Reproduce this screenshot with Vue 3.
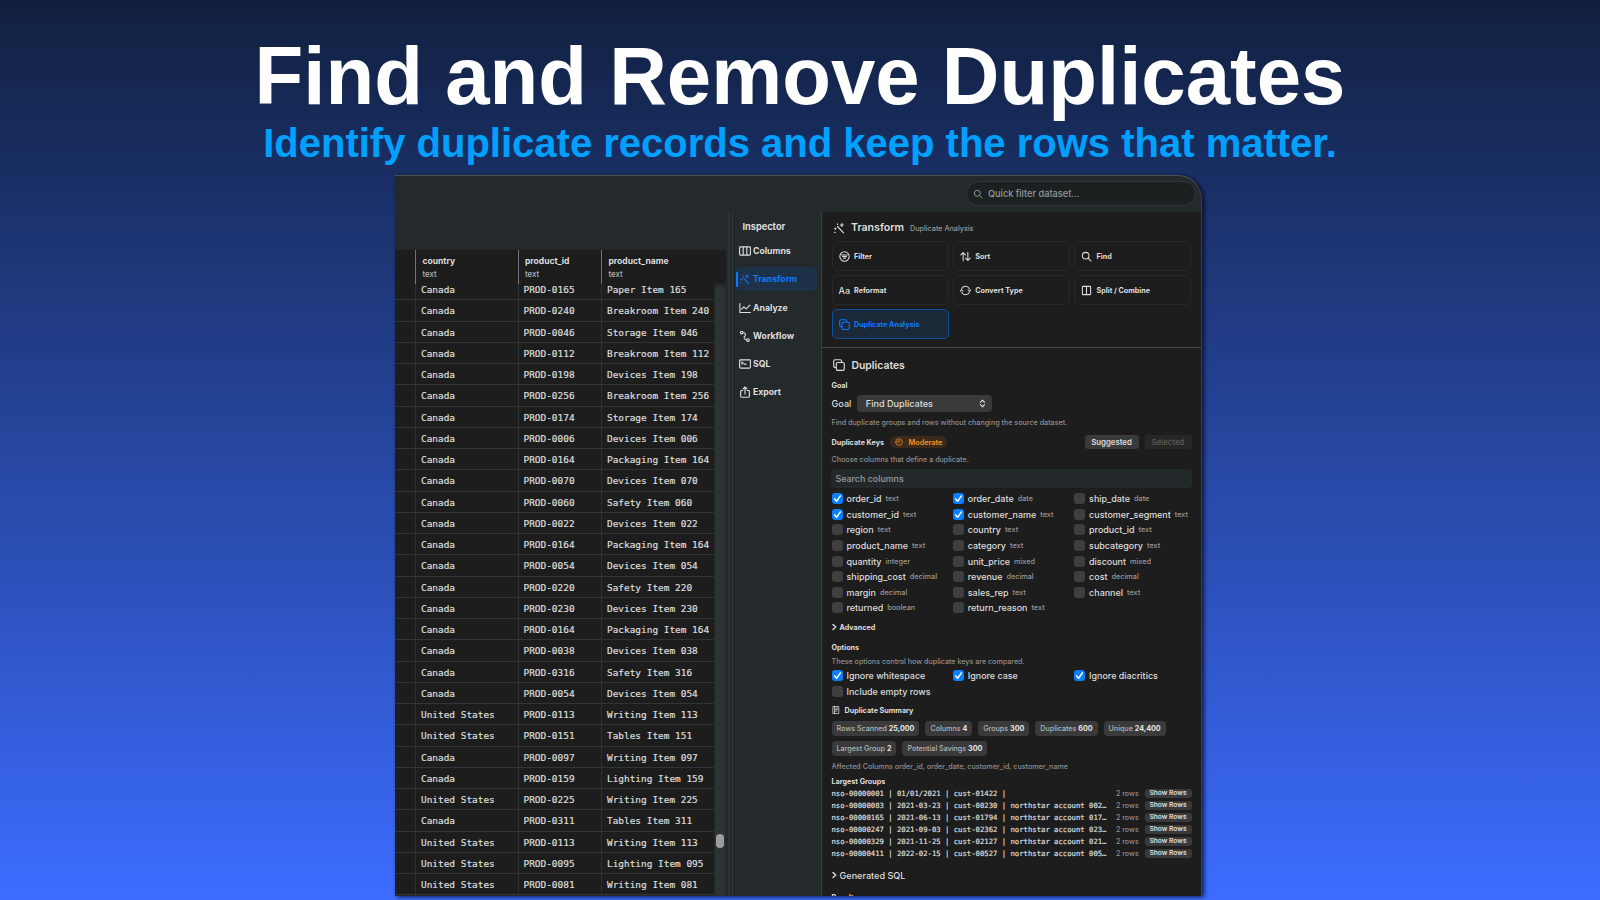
<template>
  <div class="page">
    <h1 class="title">Find and Remove Duplicates</h1>
    <p class="subtitle">Identify duplicate records and keep the rows that matter.</p>

    <div class="window">
      <div class="topbar">
        <div class="quick-filter">
          <svg class="icon" viewBox="0 0 16 16"><path :d="icons.search" /></svg>
          <span>Quick filter dataset...</span>
        </div>
      </div>

      <div class="main">
        <div class="table-pane">
          <div class="table-head">
            <div class="cell"></div>
            <div v-for="col in tableColumns" :key="col" class="cell">
              <b>{{ col }}</b>
              <small>text</small>
            </div>
          </div>
          <div class="table-body">
            <div class="rows">
              <div v-for="(row, i) in tableRows" :key="i" class="row">
                <div class="cell"></div>
                <div class="cell">{{ row[0] }}</div>
                <div class="cell">PROD-{{ row[1] }}</div>
                <div class="cell">{{ row[2] }} Item {{ row[1].slice(1) }}</div>
              </div>
            </div>
            <div class="scrollbar"><div class="thumb"></div></div>
          </div>
        </div>

        <div class="splitter"></div>

        <div class="inspector">
          <div class="inspector-title">Inspector</div>
          <div v-for="item in navItems" :key="item.label" class="nav-item" :class="{ active: item.active }">
            <svg class="icon" viewBox="0 0 16 16"><path :d="icons[item.icon]" /></svg>
            <span>{{ item.label }}</span>
          </div>
        </div>

        <div class="detail">
          <div class="detail-head">
            <svg class="icon" viewBox="0 0 16 16"><path :d="icons.wand" /></svg>
            <b>Transform</b>
            <span>Duplicate Analysis</span>
          </div>

          <div class="tools">
            <div v-for="tool in tools" :key="tool.label" class="tool" :class="{ active: tool.active }">
              <span v-if="tool.icon === 'aa'" class="aa">Aa</span>
              <svg v-else class="icon" viewBox="0 0 16 16"><path :d="icons[tool.icon]" /></svg>
              <span>{{ tool.label }}</span>
            </div>
          </div>

          <div class="panel">
            <div class="panel-title">
              <svg class="icon" viewBox="0 0 16 16"><path :d="icons.copy" /></svg>
              <span>Duplicates</span>
            </div>

            <div class="label goal-label">Goal</div>
            <div class="goal-row">
              <span>Goal</span>
              <div class="select">
                <span>Find Duplicates</span>
                <svg class="icon" viewBox="0 0 16 16"><path :d="icons.updown" /></svg>
              </div>
            </div>
            <div class="hint goal-hint">Find duplicate groups and rows without changing the source dataset.</div>

            <div class="keys-row">
              <span class="label">Duplicate Keys</span>
              <span class="badge">
                <svg class="icon" viewBox="0 0 16 16"><path :d="icons.gauge" /></svg>
                <span>Moderate</span>
              </span>
              <span class="button">Suggested</span>
              <span class="button disabled">Selected</span>
            </div>
            <div class="hint keys-hint">Choose columns that define a duplicate.</div>
            <div class="search"><span>Search columns</span></div>

            <div class="checks">
              <div v-for="key in keys" :key="key[0]" class="check">
                <span class="box" :class="{ on: key[2] }">
                  <svg v-if="key[2]" viewBox="0 0 16 16"><path :d="icons.tick" /></svg>
                </span>
                <span class="name">{{ key[0] }}</span>
                <span class="type">{{ key[1] }}</span>
              </div>
            </div>

            <div class="label advanced">
              <svg class="chevron" viewBox="0 0 10 16"><path :d="icons.chevron" /></svg>
              <span>Advanced</span>
            </div>

            <div class="label options-label">Options</div>
            <div class="hint options-hint">These options control how duplicate keys are compared.</div>
            <div class="checks options">
              <div v-for="opt in options" :key="opt[0]" class="check">
                <span class="box" :class="{ on: opt[1] }">
                  <svg v-if="opt[1]" viewBox="0 0 16 16"><path :d="icons.tick" /></svg>
                </span>
                <span class="name">{{ opt[0] }}</span>
              </div>
            </div>

            <div class="label summary-label">
              <svg class="icon" viewBox="0 0 16 16"><path :d="icons.doc" /></svg>
              <span>Duplicate Summary</span>
            </div>
            <div class="chips">
              <span v-for="chip in chips" :key="chip[0]" class="chip">{{ chip[0] }} <b>{{ chip[1] }}</b></span>
            </div>
            <div class="hint affected">Affected Columns order_id, order_date, customer_id, customer_name</div>

            <div class="label groups-label">Largest Groups</div>
            <div v-for="group in groups" :key="group" class="group">
              <span class="group-key">{{ group }}</span>
              <span class="group-count">2 rows</span>
              <span class="group-button">Show Rows</span>
            </div>

            <div class="generated">
              <svg class="chevron" viewBox="0 0 10 16"><path :d="icons.chevron" /></svg>
              <span>Generated SQL</span>
            </div>
            <div class="label results">Results</div>
          </div>
        </div>
      </div>
    </div>
  </div>
</template>

<script setup>
const icons = {
  search: 'M2 6.8a4.8 4.8 0 1 0 9.6 0a4.8 4.8 0 1 0 -9.6 0M10.4 10.4L14.6 14.6',
  columns: 'M2 2.5h12q1.2 0 1.2 1.2v8.6q0 1.2 -1.2 1.2h-12q-1.2 0 -1.2 -1.2v-8.6q0 -1.2 1.2 -1.2zM5.6 2.5v11M10.4 2.5v11',
  wand: 'M6 6L14 14.6M11.8 2v4M9.8 4h4M3 8.2v1.4M2.3 8.9h1.4M2 13.8h0.8M6 2.4v0.8',
  chart: 'M1.2 2v12h14M3.5 9.5L6.5 6.5L9.5 9.2L14.5 4.2',
  workflow: 'M1.8 3.4a1.8 1.8 0 1 0 3.6 0a1.8 1.8 0 1 0 -3.6 0M10 13.4a1.8 1.8 0 1 0 3.6 0a1.8 1.8 0 1 0 -3.6 0M5.4 3.4Q8.6 3.4 8.4 6.2T7 9Q6.2 12.4 10 13',
  sql: 'M2 2.5h12q1.2 0 1.2 1.2v8.6q0 1.2 -1.2 1.2h-12q-1.2 0 -1.2 -1.2v-8.6q0 -1.2 1.2 -1.2zM3.5 5.2L5.6 6.6L3.5 8M6.8 8.2h2.6',
  export: 'M5 6H3.4q-1.2 0 -1.2 1.2v6.6q0 1.2 1.2 1.2h9.2q1.2 0 1.2 -1.2V7.2q0 -1.2 -1.2 -1.2H11M8 10.5V1.4M5.4 3.8L8 1.2L10.6 3.8',
  filter: 'M1.2 8a6.8 6.8 0 1 0 13.6 0a6.8 6.8 0 1 0 -13.6 0M4 5.8h8M5.2 8.2h5.6M6.6 10.6h2.8',
  sort: 'M4.6 14V2.2M1.2 5.6L4.6 2.2L8 5.6M11.4 2v11.8M8 10.4L11.4 13.8L14.8 10.4',
  convert: 'M2.6 5A6.2 6.2 0 0 1 13.4 5.2M13.4 11A6.2 6.2 0 0 1 2.6 10.8M0.4 9.2L2 6.8L4.2 8.8M11.8 7.2L14 9.2L15.6 6.8',
  split: 'M3 2h10q1 0 1 1v10q0 1 -1 1h-10q-1 0 -1 -1v-10q0 -1 1 -1zM8 2v12',
  copy: 'M6.2 4.6h7q1.8 0 1.8 1.8v7q0 1.8 -1.8 1.8h-7q-1.8 0 -1.8 -1.8v-7q0 -1.8 1.8 -1.8zM4.4 11.4H2.8Q1 11.4 1 9.6V2.8Q1 1 2.8 1H9.6Q11.4 1 11.4 2.8V4.6',
  updown: 'M4.4 6L8 2.2L11.6 6M4.4 10L8 13.8L11.6 10',
  gauge: 'M1.4 8a6.6 6.6 0 1 0 13.2 0a6.6 6.6 0 1 0 -13.2 0M7.2 9L10.6 5.2M4.8 8.2a3.2 3.2 0 0 1 2.4 -3',
  tick: 'M3.8 8.6L6.8 12L12.2 4.2',
  chevron: 'M2 2.8L7.6 8L2 13.2',
  doc: 'M2.4 1h11.2v14h-11.2zM5 1v14M7 4.4h4.6M7 7.4h4.6M7 10.4h2.6',
}

const tableColumns = ['country', 'product_id', 'product_name']

const CA = 'Canada'
const US = 'United States'
const tableRows = [
  [CA, '0165', 'Paper'],
  [CA, '0240', 'Breakroom'],
  [CA, '0046', 'Storage'],
  [CA, '0112', 'Breakroom'],
  [CA, '0198', 'Devices'],
  [CA, '0256', 'Breakroom'],
  [CA, '0174', 'Storage'],
  [CA, '0006', 'Devices'],
  [CA, '0164', 'Packaging'],
  [CA, '0070', 'Devices'],
  [CA, '0060', 'Safety'],
  [CA, '0022', 'Devices'],
  [CA, '0164', 'Packaging'],
  [CA, '0054', 'Devices'],
  [CA, '0220', 'Safety'],
  [CA, '0230', 'Devices'],
  [CA, '0164', 'Packaging'],
  [CA, '0038', 'Devices'],
  [CA, '0316', 'Safety'],
  [CA, '0054', 'Devices'],
  [US, '0113', 'Writing'],
  [US, '0151', 'Tables'],
  [CA, '0097', 'Writing'],
  [CA, '0159', 'Lighting'],
  [US, '0225', 'Writing'],
  [CA, '0311', 'Tables'],
  [US, '0113', 'Writing'],
  [US, '0095', 'Lighting'],
  [US, '0081', 'Writing'],
]

const navItems = [
  { label: 'Columns', icon: 'columns' },
  { label: 'Transform', icon: 'wand', active: true },
  { label: 'Analyze', icon: 'chart' },
  { label: 'Workflow', icon: 'workflow' },
  { label: 'SQL', icon: 'sql' },
  { label: 'Export', icon: 'export' },
]

const tools = [
  { label: 'Filter', icon: 'filter' },
  { label: 'Sort', icon: 'sort' },
  { label: 'Find', icon: 'search' },
  { label: 'Reformat', icon: 'aa' },
  { label: 'Convert Type', icon: 'convert' },
  { label: 'Split / Combine', icon: 'split' },
  { label: 'Duplicate Analysis', icon: 'copy', active: true },
]

const keys = [
  ['order_id', 'text', true],
  ['order_date', 'date', true],
  ['ship_date', 'date'],
  ['customer_id', 'text', true],
  ['customer_name', 'text', true],
  ['customer_segment', 'text'],
  ['region', 'text'],
  ['country', 'text'],
  ['product_id', 'text'],
  ['product_name', 'text'],
  ['category', 'text'],
  ['subcategory', 'text'],
  ['quantity', 'integer'],
  ['unit_price', 'mixed'],
  ['discount', 'mixed'],
  ['shipping_cost', 'decimal'],
  ['revenue', 'decimal'],
  ['cost', 'decimal'],
  ['margin', 'decimal'],
  ['sales_rep', 'text'],
  ['channel', 'text'],
  ['returned', 'boolean'],
  ['return_reason', 'text'],
]

const options = [
  ['Ignore whitespace', true],
  ['Ignore case', true],
  ['Ignore diacritics', true],
  ['Include empty rows', false],
]

const chips = [
  ['Rows Scanned', '25,000'],
  ['Columns', '4'],
  ['Groups', '300'],
  ['Duplicates', '600'],
  ['Unique', '24,400'],
  ['Largest Group', '2'],
  ['Potential Savings', '300'],
]

const groups = [
  'nso-00000001 | 01/01/2021 | cust-01422 |',
  'nso-00000083 | 2021-03-23 | cust-00230 | northstar account 002…',
  'nso-00000165 | 2021-06-13 | cust-01794 | northstar account 017…',
  'nso-00000247 | 2021-09-03 | cust-02362 | northstar account 023…',
  'nso-00000329 | 2021-11-25 | cust-02127 | northstar account 021…',
  'nso-00000411 | 2022-02-15 | cust-00527 | northstar account 005…',
]
</script>

<style>
body {
  overflow: hidden;
}
</style>

<style scoped>
.page {
  box-sizing: border-box;
  width: 1600px;
  height: 900px;
  overflow: hidden;
  background: linear-gradient(#11203f, #3c6cff);
  font-family: Inter, "Liberation Sans", sans-serif;
  color: #dedede;
}

.title,
.subtitle {
  margin: 0;
  font-family: "Liberation Sans", Arial, sans-serif;
  font-weight: 700;
  text-align: center;
  white-space: nowrap;
}

.title {
  height: 94px;
  padding-top: 30px;
  font-size: 79.8px;
  line-height: 92px;
  color: #fff;
  transform: scaleY(1.03);
}

.subtitle {
  height: 51px;
  font-size: 40px;
  line-height: 39px;
  color: #00a0ff;
}

.window {
  box-sizing: border-box;
  display: flex;
  flex-direction: column;
  width: 807px;
  height: 721px;
  margin-left: 395px;
  overflow: hidden;
  background: #24292b;
  border-top: 1px solid #4c5154;
  border-right: 1px solid #3c4042;
  border-top-right-radius: 24px;
  box-shadow: 2px 1px 4px rgba(0, 0, 20, 0.75);
}

.icon {
  flex: none;
  width: 12px;
  height: 12px;
  fill: none;
  stroke: currentColor;
  stroke-width: 1.5;
  stroke-linecap: round;
  stroke-linejoin: round;
}

.topbar {
  display: flex;
  flex: none;
  justify-content: flex-end;
  box-sizing: border-box;
  height: 36px;
  padding: 5px 5px 0 0;
}

.quick-filter {
  display: flex;
  align-items: center;
  gap: 5px;
  box-sizing: border-box;
  width: 230px;
  height: 25px;
  padding-left: 6px;
  border: 1px solid #30373a;
  border-radius: 13px;
  background: #1b2021;
  color: #979a9b;
  font-size: 9.2px;
  font-weight: 500;
}

.quick-filter .icon {
  width: 10px;
  height: 10px;
}

.main {
  display: flex;
  flex: 1;
  min-height: 0;
}

/* data table */
.table-pane {
  flex: none;
  width: 331px;
  padding-top: 38px;
}

.table-head,
.row {
  display: grid;
  grid-template-columns: 21px 102.5px 83.5px 1fr;
}

.table-head {
  height: 34px;
  background: #1d1d1d;
}

.table-head .cell {
  display: flex;
  flex-direction: column;
  padding: 5px 0 0 6.5px;
  border-right: 1px solid #747474;
  font-size: 8.5px;
  line-height: 12px;
}

.table-head .cell:last-child {
  border-right: 0;
}

.table-head small {
  margin-top: 1px;
  font-size: 7.8px;
  font-weight: 500;
  color: #b4b4b4;
}

.table-body {
  display: flex;
  height: 612px;
  overflow: hidden;
}

.rows {
  width: 319px;
  margin-top: -5px;
}

.row {
  height: 21.25px;
  box-sizing: border-box;
  border-bottom: 1px solid #303435;
  background: #1d1d1d;
}

.row .cell {
  padding-left: 5px;
  border-right: 1px solid #2d3132;
  font-family: "DejaVu Sans Mono", "Liberation Mono", monospace;
  font-size: 9.43px;
  line-height: 22px;
  white-space: nowrap;
  -webkit-text-stroke: 0.2px currentColor;
}

.row .cell:last-child {
  border-right: 0;
}

.scrollbar {
  width: 10px;
  margin: 2px 0 0 1px;
  padding-top: 548px;
  box-sizing: border-box;
  border-radius: 5px 5px 0 0;
  background: #2d3234;
}

.thumb {
  width: 8px;
  height: 14px;
  margin-left: 1px;
  border-radius: 4px;
  background: #9b9d9e;
}

.splitter {
  flex: none;
  box-sizing: border-box;
  width: 5px;
  margin-left: 2px;
  border-left: 2px solid #2e3335;
  border-right: 1px solid #32383a;
}

/* inspector navigation */
.inspector {
  flex: none;
  box-sizing: border-box;
  width: 89px;
  padding: 8px 4px 0 3px;
  border-right: 1px solid #3b4042;
}

.inspector-title {
  height: 19px;
  padding-left: 6.5px;
  font-size: 9.2px;
  font-weight: 700;
  line-height: 13px;
}

.nav-item {
  display: flex;
  align-items: center;
  gap: 2px;
  box-sizing: border-box;
  height: 24px;
  margin-bottom: 4.3px;
  padding-left: 3px;
  border-radius: 5px;
  font-size: 8.7px;
  font-weight: 700;
}

.nav-item.active {
  padding-left: 3px;
  background: linear-gradient(#0a7aff, #0a7aff) 0 50% / 2px 15px no-repeat #1d3249;
  color: #0a7aff;
}

.nav-item.active .icon {
  width: 11px;
  margin-right: 1px;
}

/* detail pane */
.detail {
  flex: 1;
  min-width: 0;
  background: #1d1d1d;
}

.detail-head {
  display: flex;
  align-items: center;
  height: 29px;
  padding: 2px 0 0 11px;
  box-sizing: border-box;
}

.detail-head b {
  margin: 0 6px 0 6px;
  font-size: 10.6px;
  font-weight: 600;
}

.detail-head span {
  padding-top: 1px;
  font-size: 7.2px;
  font-weight: 500;
  color: #999;
}

.tools {
  display: grid;
  grid-template-columns: repeat(3, 117.3px);
  grid-auto-rows: 30px;
  gap: 4px;
  height: 106px;
  padding-left: 9.5px;
  border-bottom: 1px solid #454748;
}

.tool {
  display: flex;
  align-items: center;
  gap: 4.5px;
  box-sizing: border-box;
  padding-left: 6px;
  border: 1px solid #282828;
  border-radius: 5px;
  font-size: 7.2px;
  font-weight: 700;
}

.tool.active {
  border-color: #0b519e;
  background: #1b2837;
  color: #0a7aff;
}

.tool .icon {
  width: 11px;
  height: 11px;
}

.aa {
  width: 11px;
  font-size: 9px;
  font-weight: 500;
}

.panel {
  display: flow-root;
  padding: 0 9.5px 0 9.5px;
}

.panel-title {
  display: flex;
  align-items: center;
  gap: 7px;
  height: 18px;
  margin-top: 8px;
  padding-left: 1px;
  font-size: 10.4px;
  font-weight: 600;
}

.label {
  height: 11px;
  font-size: 7.2px;
  font-weight: 700;
  line-height: 11px;
}

.hint {
  height: 11px;
  font-size: 7.15px;
  font-weight: 500;
  line-height: 11px;
  color: #8e8e8e;
  white-space: nowrap;
}

.goal-label {
  margin-top: 5.5px;
}

.goal-row {
  display: flex;
  align-items: center;
  gap: 6px;
  height: 17px;
  margin-top: 4.5px;
  font-size: 9.1px;
  font-weight: 500;
}

.select {
  display: flex;
  align-items: center;
  justify-content: space-between;
  box-sizing: border-box;
  width: 135px;
  height: 17px;
  padding: 0 5px 0 8.5px;
  border-radius: 4px;
  background: #3a3a3a;
}

.select .icon {
  width: 9px;
  height: 9px;
  stroke-width: 2;
}

.goal-hint {
  margin-top: 5px;
}

.keys-row {
  display: flex;
  align-items: center;
  height: 14px;
  margin-top: 7px;
}

.badge {
  display: flex;
  align-items: center;
  gap: 6px;
  box-sizing: border-box;
  width: 57px;
  height: 12px;
  margin: 0 auto 0 6px;
  padding-left: 4.5px;
  border-radius: 6px;
  background: #3b2a1a;
  color: #f5922a;
  font-size: 7.3px;
  font-weight: 600;
}

.badge .icon {
  width: 8px;
  height: 8px;
}

.button {
  width: 54px;
  height: 14px;
  border-radius: 3px;
  background: #3a3a3a;
  font-size: 7.8px;
  font-weight: 600;
  line-height: 14px;
  text-align: center;
}

.button.disabled {
  width: 47px;
  margin-left: 6px;
  background: #272727;
  color: #5c5c5c;
  font-weight: 500;
}

.keys-hint {
  margin-top: 5px;
}

.search {
  display: flex;
  align-items: center;
  height: 19px;
  margin: 4px 0 0 -1px;
  padding-left: 5px;
  border-radius: 4px;
  background: #23292b;
  color: #999c9d;
  font-size: 8.9px;
  font-weight: 500;
}

.checks {
  display: grid;
  grid-template-columns: repeat(3, 121.3px);
  grid-auto-rows: 15.6px;
  margin-top: 3px;
}

.check {
  display: flex;
  align-items: center;
  white-space: nowrap;
}

.box {
  display: flex;
  width: 11px;
  height: 11px;
  margin-right: 4px;
  border-radius: 3px;
  background: #3f3f3f;
}

.box.on {
  background: #0a7fff;
}

.box svg {
  width: 11px;
  height: 11px;
  fill: none;
  stroke: #fff;
  stroke-width: 2.2;
  stroke-linecap: round;
  stroke-linejoin: round;
}

.name {
  font-size: 8.95px;
  font-weight: 500;
}

.type {
  margin-left: 4px;
  font-size: 7.3px;
  font-weight: 500;
  color: #979797;
}

.chevron {
  width: 5px;
  height: 8px;
  fill: none;
  stroke: currentColor;
  stroke-width: 2.8;
  stroke-linecap: round;
  stroke-linejoin: round;
}

.advanced {
  display: flex;
  align-items: center;
  gap: 3px;
  margin-top: 6.2px;
}

.options-label {
  margin-top: 9px;
}

.options-hint {
  margin-top: 3px;
}

.options {
  grid-auto-rows: 16px;
  margin-top: 1px;
}

.summary-label {
  display: flex;
  align-items: center;
  gap: 5px;
  margin-top: 5px;
}

.summary-label .icon {
  width: 8px;
  height: 8px;
}

.chips {
  display: flex;
  flex-wrap: wrap;
  gap: 5px 6px;
  margin-top: 5px;
}

.chip {
  box-sizing: border-box;
  height: 15px;
  padding: 0 5px;
  border-radius: 4px;
  background: #3a3a3a;
  color: #b5b5b5;
  font-size: 7.15px;
  font-weight: 500;
  line-height: 15px;
}

.chip b {
  color: #e6e6e6;
  font-weight: 700;
}

.affected {
  margin-top: 5px;
}

.groups-label {
  margin: 4px 0 0.5px;
}

.group {
  display: flex;
  align-items: center;
  height: 12px;
}

.group-key {
  flex: 1;
  font-family: "DejaVu Sans Mono", "Liberation Mono", monospace;
  font-size: 7.25px;
  white-space: pre;
  -webkit-text-stroke: 0.2px currentColor;
}

.group-count {
  width: 28.5px;
  font-size: 7.1px;
  font-weight: 500;
  color: #8e8e8e;
}

.group-button {
  width: 47px;
  height: 9px;
  border-radius: 3px;
  background: #3a3a3a;
  font-size: 6.7px;
  font-weight: 600;
  line-height: 9px;
  text-align: center;
}

.generated {
  display: flex;
  align-items: center;
  gap: 3px;
  height: 13px;
  margin-top: 9.5px;
  font-size: 9.1px;
  font-weight: 500;
}

.results {
  margin-top: 10px;
}
</style>
